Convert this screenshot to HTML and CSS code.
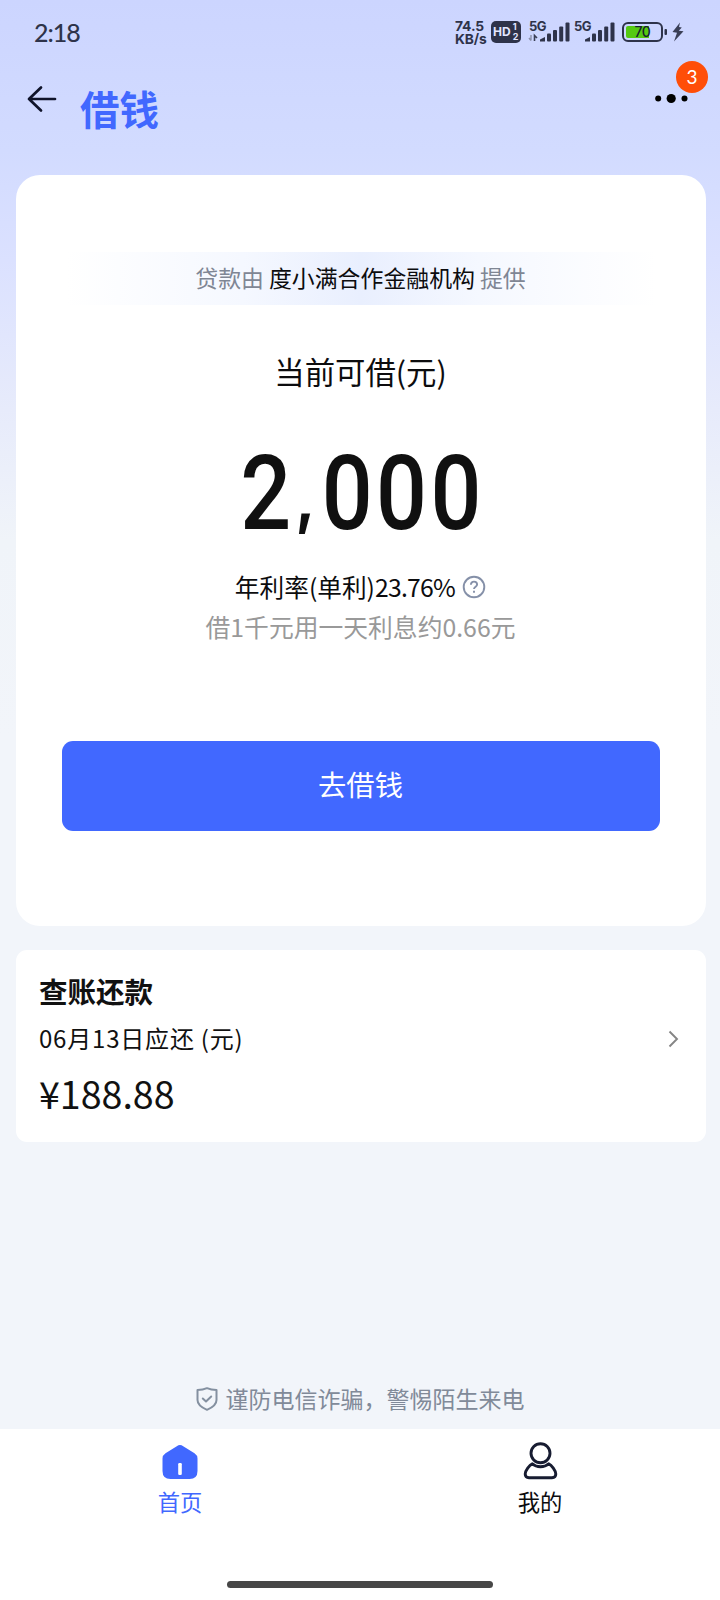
FILE: index.html
```html
<!DOCTYPE html>
<html lang="zh-CN">
<head>
<meta charset="utf-8">
<title>借钱</title>
<link rel="stylesheet" href="styles.css">
</head>
<body>
<div class="screen">
  <header class="status">
    <span class="clock">2:18</span>
    <div class="speed"><span>74.5</span><span>KB/s</span></div>
    <div class="hd"><span class="hd-label">HD</span><span class="hd-nums"><i>1</i><i>2</i></span></div>
    <div class="signal first">
      <span class="net">5G</span>
      <svg width="44" height="22" viewBox="0 0 44 22"><path d="M3 14v5.500M1 17l2 2.500" stroke="#8b90aa" stroke-width="1.400" fill="none"/><path d="M6.500 20v-5.500l2.500 2.500" stroke="#3a3f56" stroke-width="1.600" fill="none"/><g fill="#2e334a"><path d="M12 20.500v-2l5-2.500v4.500z"/><rect x="19" y="12.500" width="4" height="8" rx="1"/><rect x="25" y="9" width="4" height="11.500" rx="1"/><rect x="31.200" y="5.500" width="4" height="15" rx="1"/><rect x="37.500" y="1.500" width="4" height="19" rx="1"/></g></svg>
    </div>
    <div class="signal">
      <span class="net">5G</span>
      <svg width="44" height="22" viewBox="0 0 44 22"><g fill="#2e334a"><path d="M12 20.500v-2l5-2.500v4.500z"/><rect x="19" y="12.500" width="4" height="8" rx="1"/><rect x="25" y="9" width="4" height="11.500" rx="1"/><rect x="31.200" y="5.500" width="4" height="15" rx="1"/><rect x="37.500" y="1.500" width="4" height="19" rx="1"/></g></svg>
    </div>
    <div class="battery"><span class="level">70</span></div>
    <svg class="nub" width="4" height="8" viewBox="0 0 4 8"><rect x=".5" y="1" width="2.500" height="6" rx="1" fill="#2e334a"/></svg>
    <svg class="bolt" width="12" height="20" viewBox="0 0 12 20"><path d="M8 .5L.500 10l4.500 .8-3 8.700L11.500 9.300 6.800 8.700 9.800 5.500 7 5z" fill="#3a3f56"/></svg>
  </header>

  <nav class="topbar">
    <svg class="back" width="30" height="28" viewBox="0 0 30 28" fill="none" stroke="#10142a" stroke-width="2.700" stroke-linecap="round" stroke-linejoin="round"><path d="M28 14H2M14 2.500L2 14l12 11.500"/></svg>
    <h1 class="title">借钱</h1>
    <div class="more">
      <svg width="34" height="12" viewBox="0 0 34 12"><circle cx="3.200" cy="5.500" r="3"/><circle cx="16.200" cy="5.500" r="4.600"/><circle cx="29.500" cy="5.500" r="3"/></svg>
      <span class="badge">3</span>
    </div>
  </nav>

  <main class="loan">
    <p class="provider">贷款由<strong>度小满合作金融机构</strong>提供</p>
    <p class="label">当前可借(元)</p>
    <p class="amount"><span>2</span><span class="comma">,</span><span>000</span></p>
    <p class="rate"><span>年利率(单利)<span class="num">23.76%</span></span>
      <svg width="24" height="24" viewBox="0 0 24 24" fill="none" stroke="#8590a8" stroke-width="1.900"><circle cx="12" cy="12" r="10.300"/><path d="M8.900 9.800c0-1.900 1.300-3.200 3.100-3.200s3.100 1.200 3.100 2.900c0 2.200-3.100 2.300-3.100 4.600"/><path d="M12 15.700v2"/></svg>
    </p>
    <p class="daily">借1千元用一天利息约0.66元</p>
    <button class="cta" type="button">去借钱</button>
  </main>

  <section class="bill">
    <div class="bill-info">
      <h2 class="bill-title">查账还款</h2>
      <p class="bill-date">06月13日应还 (元)</p>
      <p class="bill-sum">¥188.88</p>
    </div>
    <svg class="chevron" width="12" height="18" viewBox="0 0 12 18" fill="none" stroke="#858585" stroke-width="1.900"><path d="M1.500 1.500L9 9l-7.500 7.500"/></svg>
  </section>

  <p class="warning">
    <svg width="22" height="24" viewBox="0 0 22 24" fill="none" stroke="#8490a0" stroke-width="2" stroke-linecap="round" stroke-linejoin="round"><path d="M11 1.200C14 2.500 17.500 3 20.500 3v10c0 4.500-4 7.500-9.500 9.800C5.500 20.500 1.500 17.500 1.500 13V3C4.500 3 8 2.500 11 1.200z"/><path d="M6.800 11.500l3.200 3 5.200-5"/></svg>
    <span>谨防电信诈骗，警惕陌生来电</span>
  </p>

  <footer class="tabs">
    <a class="tab active">
      <svg width="36" height="38" viewBox="0 0 36 38"><path d="M14.800 4.200Q18 2 21.200 4.200L32.500 11.200Q35.500 13.200 35.500 16.500V29Q35.500 37 27.500 37H8.500Q.500 37 .500 29V16.500Q.500 13.200 3.500 11.200z" fill="#4168ff"/><rect x="16.200" y="21" width="3.600" height="12" rx="1.200" fill="#fff"/></svg>
      <span>首页</span>
    </a>
    <a class="tab">
      <svg width="36" height="38" viewBox="0 0 36 38" fill="none" stroke="#171c31" stroke-width="2.900" stroke-linejoin="round"><circle cx="18.500" cy="11.300" r="9.500"/><path d="M10.300 21.800C7.500 23 3.200 28.500 3.200 32Q3.200 35.700 7 35.700H30Q33.800 35.700 33.800 32C33.800 28.500 29.500 23 26.700 21.800 24.500 23.800 21.500 24.800 18.500 24.800S12.500 23.800 10.300 21.800z"/></svg>
      <span>我的</span>
    </a>
    <div class="indicator"></div>
  </footer>
</div>
</body>
</html>
```

FILE: styles.css
```css
* { box-sizing: border-box; margin: 0; padding: 0; }

body {
  font-family: "Noto Sans CJK SC", "Noto Sans", sans-serif;
  color: #0c0c0e;
}

svg { display: block; flex: none; }

.screen {
  width: 720px;
  height: 1600px;
  display: flex;
  flex-direction: column;
  overflow: hidden;
  background: linear-gradient(#ccd5ff 0, #d2dbff 150px, #dbe1ff 260px, #e7ebfb 410px, #f0f4f9 540px, #f2f5fa 740px);
}

/* system status row */
.status {
  height: 64px;
  flex: none;
  display: flex;
  align-items: center;
  padding: 0 36px 0 34px;
  color: #2e334a;
}
.clock {
  font: 500 25px/30px Lato, sans-serif;
  letter-spacing: -1px;
  margin: -1px auto 0 0;
}
.speed {
  display: flex;
  flex-direction: column;
  width: 36px;
  padding-top: 2px;
  font: 700 13.800px/13px Inter, sans-serif;
  letter-spacing: -0.100px;
}
.hd {
  width: 30px;
  height: 22px;
  border-radius: 5px;
  background: #2e334a;
  color: #e2e6ff;
  display: flex;
  align-items: center;
  padding-left: 2px;
  font: 700 12px/12px Inter, sans-serif;
}
.hd-nums {
  display: flex;
  flex-direction: column;
  font-size: 9px;
  line-height: 10px;
  margin-left: 2px;
}
.hd-nums i { font-style: normal; }
.signal { position: relative; margin-left: 1px; }
.signal.first { margin-left: 7px; }
.net {
  position: absolute;
  left: 1px;
  top: -1px;
  font: 700 13px/13px Inter, sans-serif;
  letter-spacing: -0.5px;
}
.battery {
  width: 41px;
  height: 20px;
  margin-left: 5px;
  border: 2px solid #2e334a;
  border-radius: 6px;
  padding: 2px;
}
.level {
  display: block;
  height: 12px;
  border-radius: 2px;
  background: linear-gradient(90deg, #55c912 70%, transparent 70%);
  font: 500 14px/12px Inter, sans-serif;
  letter-spacing: -0.500px;
  text-align: center;
  color: #17202c;
}
.nub { margin-left: 1px; }
.bolt { margin-left: 4px; }

/* page header */
.topbar {
  height: 111px;
  flex: none;
  display: flex;
  align-items: flex-start;
  padding: 21px 31px 0 27px;
}
.title {
  margin: -7px auto 0 23px;
  font-size: 39.500px;
  line-height: 60px;
  font-weight: 700;
  color: #4168ff;
}
.more { position: relative; padding-top: 8px; }
.badge {
  position: absolute;
  left: 21px;
  top: -24px;
  width: 32px;
  height: 32px;
  border-radius: 50%;
  background: #ff4e08;
  color: #fff;
  font: 400 19px/32px Lato, sans-serif;
  text-align: center;
}

/* credit card */
.loan {
  height: 751px;
  flex: none;
  margin: 0 14.500px 0 15.500px;
  border-radius: 24px;
  background: #fff;
  display: flex;
  flex-direction: column;
  align-items: center;
  padding-top: 77px;
}
.provider {
  width: 590px;
  height: 53px;
  display: flex;
  justify-content: center;
  gap: 5px;
  background: linear-gradient(90deg, #fff, #f5f8ff 30%, #e9effe 50%, #f5f8ff 70%, #fff);
  font-size: 22.900px;
  line-height: 50px;
  color: #7f8694;
}
.provider strong { font-weight: 400; color: #0c0c0e; }
.label { margin-top: 44px; font-size: 30.400px; line-height: 44px; }
.amount {
  height: 74px;
  margin: 64px 0 0 5px;
  display: flex;
  font: 500 103px/74px Roboto, sans-serif;
  letter-spacing: 4px;
  color: #101010;
  transform: scaleX(0.87);
}
.comma {
  width: 31px;
  padding-left: 1px;
  font: 700 68px/78px Inter, sans-serif;
}
.rate {
  margin-top: 35px;
  display: flex;
  align-items: center;
  gap: 7px;
  font-size: 24.700px;
  line-height: 40px;
}
.rate svg { margin-top: 2px; }
.num { letter-spacing: -0.700px; }
.daily {
  font-size: 24.800px;
  line-height: 41px;
  color: #999;
}
.cta {
  width: 598px;
  height: 90px;
  margin-top: 93.500px;
  border: 0;
  border-radius: 11px;
  background: #4168ff;
  color: #fff;
  font: 400 28.300px/84px "Noto Sans CJK SC", sans-serif;
  padding-bottom: 4px;
}

/* repayment card */
.bill {
  height: 192px;
  flex: none;
  margin: 24px 14.500px 0 15.500px;
  padding: 0 26px 0 23.500px;
  border-radius: 11px;
  background: #fff;
  display: flex;
  align-items: center;
  justify-content: space-between;
  color: #111;
}
.bill-info { display: flex; flex-direction: column; height: 100%; padding-top: 20px; }
.bill-title { font-size: 28.500px; line-height: 42px; font-weight: 700; }
.bill-date { font-size: 24px; line-height: 36px; margin-top: 8px; letter-spacing: 0.800px; }
.bill-sum { font-size: 37.600px; line-height: 56px; margin-top: 9px; }
.chevron { margin-bottom: 14px; }

.warning {
  margin-top: auto;
  height: 60px;
  flex: none;
  display: flex;
  align-items: center;
  justify-content: center;
  gap: 8px;
  font-size: 23px;
  line-height: 56px;
  color: #818a99;
}
.warning span { margin-top: -2px; }

/* bottom navigation */
.tabs {
  height: 171px;
  flex: none;
  display: grid;
  grid-template-columns: 1fr 1fr;
  grid-template-rows: 152px 7px;
  background: #fff;
}
.tab {
  display: flex;
  flex-direction: column;
  align-items: center;
  padding-top: 13px;
  font-size: 22.300px;
  line-height: 32px;
  gap: 5px;
}
.active { color: #4168ff; }
.indicator {
  grid-column: 1 / 3;
  justify-self: center;
  width: 266px;
  height: 7px;
  border-radius: 4px;
  background: #474747;
}
```
